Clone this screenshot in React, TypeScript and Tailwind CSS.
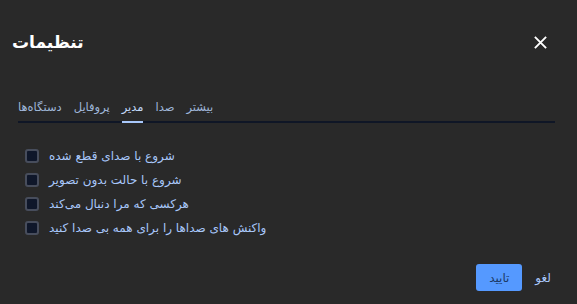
import { useState } from "react";

const tabs = ["دستگاه‌ها", "پروفایل", "مدیر", "صدا", "بیشتر"];

const options = [
  "شروع با صدای قطع شده",
  "شروع با حالت بدون تصویر",
  "هرکسی که مرا دنبال می‌کند",
  "واکنش های صداها را برای همه بی صدا کنید",
];

export default function App() {
  const [active, setActive] = useState("مدیر");
  const [checked, setChecked] = useState<boolean[]>([false, false, false, false]);

  return (
    <div
      className="w-[577px] h-[304px] bg-[#292929] text-[#a8c7fa] overflow-hidden flex flex-col"
      style={{ fontFamily: '"DejaVu Sans", sans-serif' }}
    >
      <div className="flex items-center justify-between pl-[12px] pr-[29px] pt-[28px] h-[56px]">
        <h1 dir="rtl" className="text-[17px] font-bold text-white leading-none">
          تنظیمات
        </h1>
        <button className="text-white" aria-label="بستن">
          <svg width="15" height="15" viewBox="0 0 16 16" fill="none" stroke="currentColor" strokeWidth="2">
            <path d="M2 2L14 14M14 2L2 14" />
          </svg>
        </button>
      </div>

      <div className="ml-[18px] mr-[22px] mt-[46px] border-b-[2px] border-[#0f1626] flex gap-[12px]">
        {tabs.map((t) => (
          <button
            key={t}
            dir="rtl"
            onClick={() => setActive(t)}
            className={`relative pb-[7px] text-[11.5px] leading-none ${
              active === t ? "text-[#c2d7f7]" : "text-[#9fb6d8]"
            }`}
          >
            {t}
            {active === t && (
              <span className="absolute left-0 right-0 -bottom-[2px] h-[2px] bg-[#a8c7fa]" />
            )}
          </button>
        ))}
      </div>

      <div className="flex flex-col gap-[10px] mt-[26px] pl-[25px]">
        {options.map((o, i) => (
          <label key={o} className="flex items-center gap-[10px] h-[14px] cursor-pointer">
            <input
              type="checkbox"
              checked={checked[i]}
              onChange={() => setChecked(checked.map((c, j) => (j === i ? !c : c)))}
              className="appearance-none w-[14px] h-[14px] rounded-[3px] bg-[#0f172a] border-2 border-[#474d5c] checked:bg-[#a8c7fa]"
            />
            <span dir="rtl" className="text-[12px] leading-none text-[#a8c7fa]">
              {o}
            </span>
          </label>
        ))}
      </div>

      <div className="mt-auto mb-[13px] flex items-center justify-end gap-[13px] pr-[26px]">
        <button
          dir="rtl"
          className="w-[46px] h-[27px] rounded-[3px] bg-[#5599ff] text-[#1c3a66] text-[12px]"
        >
          تایید
        </button>
        <button dir="rtl" className="text-[12px] text-[#a8c7fa]">
          لغو
        </button>
      </div>
    </div>
  );
}
